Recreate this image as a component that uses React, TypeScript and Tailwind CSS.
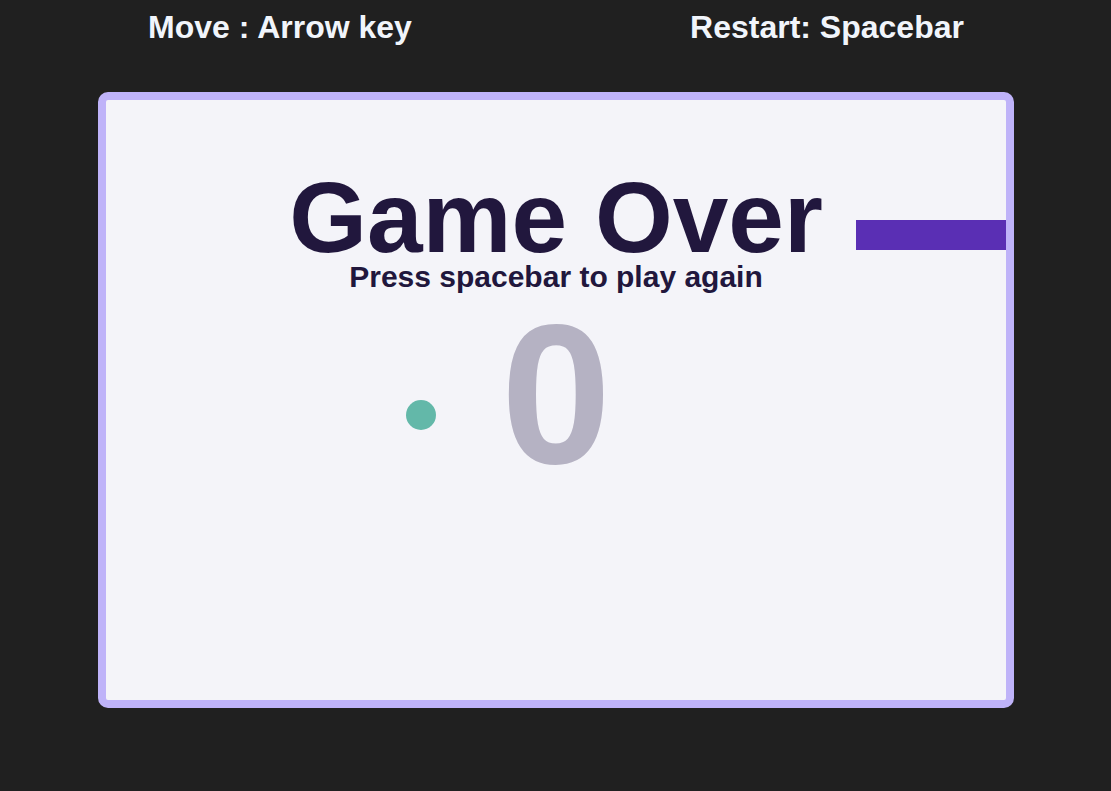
import React from "react";

const App = () => {
  return (
    <div
      className="min-h-screen w-full bg-[#202020] flex flex-col"
      style={{ fontFamily: '"Liberation Sans", Arial, sans-serif' }}
    >
      {/* controls */}
      <div className="flex h-[92px] pt-[11px] text-[32px] leading-none font-bold text-[#f1f5fb]">
        <div className="w-[560px] text-center">Move : Arrow key</div>
        <div className="w-[534px] text-center">Restart: Spacebar</div>
      </div>

      {/* board */}
      <div className="relative ml-[98px] w-[916px] h-[616px] rounded-[10px] border-8 border-[#bfb3f9] bg-[#f4f4f9] flex flex-col items-center">
        <h1 className="mt-[77px] text-[100px] leading-[80px] font-bold text-[#21173d]">Game Over</h1>
        <p className="mt-[5px] text-[30px] leading-none font-bold text-[#21173d]">Press spacebar to play again</p>
        <div className="mt-[4px] text-[198px] leading-none font-bold text-[#b5b2c3]">0</div>

        <div className="absolute left-[750px] top-[120px] w-[150px] h-[30px] bg-[#5a2fb4]" />
        <div className="absolute left-[300px] top-[300px] w-[30px] h-[30px] rounded-full bg-[#63b8a9]" />
      </div>
    </div>
  );
};

export default App;
